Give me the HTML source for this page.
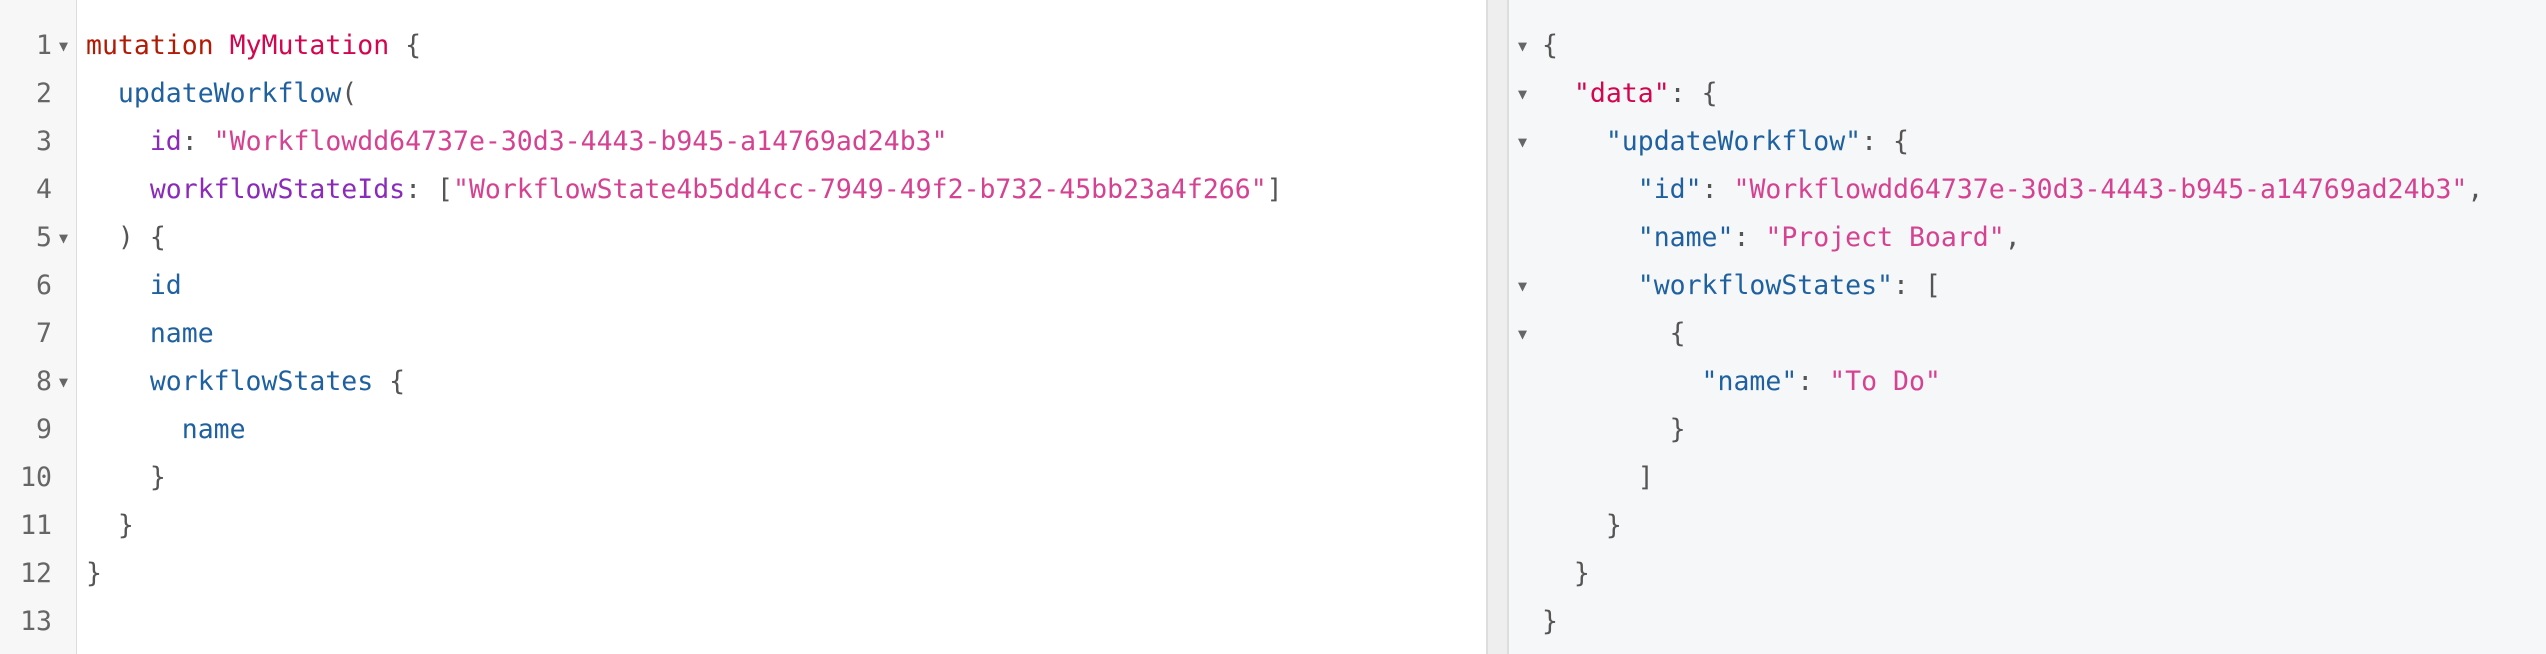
<!DOCTYPE html>
<html><head><meta charset="utf-8"><style>
*{margin:0;padding:0;box-sizing:border-box}
body{width:2546px;height:654px;overflow:hidden;background:#fff;font-family:"DejaVu Sans Mono","Liberation Mono",monospace;font-size:26.5px;color:#555}
.left{position:absolute;left:0;top:0;width:1486px;height:654px;background:#fff}
.gutter{position:absolute;left:0;top:0;width:77px;height:654px;background:#f7f7f7;border-right:1px solid #ddd}
.div{position:absolute;left:1486px;top:0;width:23px;height:654px;background:#eee;border-left:2px solid #ddd;border-right:2px solid #ddd}
.right{position:absolute;left:1509px;top:0;width:1037px;height:654px;background:#f6f7f8}
.l{position:absolute;height:48px;line-height:48px;white-space:pre}
.n{position:absolute;width:52px;text-align:right;color:#666;height:48px;line-height:48px}
.a{position:absolute;font-size:15px;color:#666;height:48px;line-height:48px}
.k{color:#b11a04}.d{color:#d2054e}.f{color:#1f61a0}.g{color:#8b2bb9}.s{color:#d64292}
</style></head><body>
<div class="left"><div class="gutter"></div>
<div class="n" style="top:22px">1</div><div class="a" style="left:59px;top:22px">▼</div>
<div class="n" style="top:70px">2</div>
<div class="n" style="top:118px">3</div>
<div class="n" style="top:166px">4</div>
<div class="n" style="top:214px">5</div><div class="a" style="left:59px;top:214px">▼</div>
<div class="n" style="top:262px">6</div>
<div class="n" style="top:310px">7</div>
<div class="n" style="top:358px">8</div><div class="a" style="left:59px;top:358px">▼</div>
<div class="n" style="top:406px">9</div>
<div class="n" style="top:454px">10</div>
<div class="n" style="top:502px">11</div>
<div class="n" style="top:550px">12</div>
<div class="n" style="top:598px">13</div>
<div class="l" style="left:86px;top:22px"><span class="k">mutation</span> <span class="d">MyMutation</span> {</div>
<div class="l" style="left:86px;top:70px">  <span class="f">updateWorkflow</span>(</div>
<div class="l" style="left:86px;top:118px">    <span class="g">id</span>: <span class="s">"Workflowdd64737e-30d3-4443-b945-a14769ad24b3"</span></div>
<div class="l" style="left:86px;top:166px">    <span class="g">workflowStateIds</span>: [<span class="s">"WorkflowState4b5dd4cc-7949-49f2-b732-45bb23a4f266"</span>]</div>
<div class="l" style="left:86px;top:214px">  ) {</div>
<div class="l" style="left:86px;top:262px">    <span class="f">id</span></div>
<div class="l" style="left:86px;top:310px">    <span class="f">name</span></div>
<div class="l" style="left:86px;top:358px">    <span class="f">workflowStates</span> {</div>
<div class="l" style="left:86px;top:406px">      <span class="f">name</span></div>
<div class="l" style="left:86px;top:454px">    }</div>
<div class="l" style="left:86px;top:502px">  }</div>
<div class="l" style="left:86px;top:550px">}</div>
</div>
<div class="div"></div>
<div class="right">
<div class="a" style="left:9px;top:22px">▼</div>
<div class="a" style="left:9px;top:70px">▼</div>
<div class="a" style="left:9px;top:118px">▼</div>
<div class="a" style="left:9px;top:262px">▼</div>
<div class="a" style="left:9px;top:310px">▼</div>
<div class="l" style="left:33px;top:22px">{</div>
<div class="l" style="left:33px;top:70px">  <span class="d">"data"</span>: {</div>
<div class="l" style="left:33px;top:118px">    <span class="f">"updateWorkflow"</span>: {</div>
<div class="l" style="left:33px;top:166px">      <span class="f">"id"</span>: <span class="s">"Workflowdd64737e-30d3-4443-b945-a14769ad24b3"</span>,</div>
<div class="l" style="left:33px;top:214px">      <span class="f">"name"</span>: <span class="s">"Project Board"</span>,</div>
<div class="l" style="left:33px;top:262px">      <span class="f">"workflowStates"</span>: [</div>
<div class="l" style="left:33px;top:310px">        {</div>
<div class="l" style="left:33px;top:358px">          <span class="f">"name"</span>: <span class="s">"To Do"</span></div>
<div class="l" style="left:33px;top:406px">        }</div>
<div class="l" style="left:33px;top:454px">      ]</div>
<div class="l" style="left:33px;top:502px">    }</div>
<div class="l" style="left:33px;top:550px">  }</div>
<div class="l" style="left:33px;top:598px">}</div>
</div>
</body></html>
